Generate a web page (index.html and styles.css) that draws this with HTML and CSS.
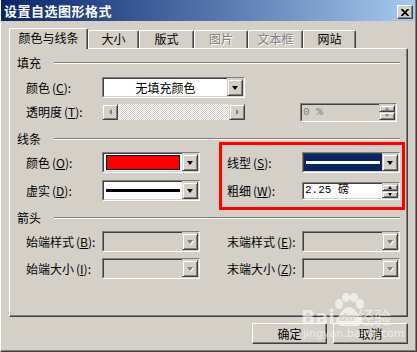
FILE: index.html
```html
<!DOCTYPE html>
<html>

<head>
  <meta charset="UTF-8">
  <meta name="viewport" content="width=device-width, initial-scale=1">
  <title>设置自选图形格式</title>

  <link rel="stylesheet" href="styles.css">
</head>

<body>

  <div class="window">
    <div class="titlebar">
      <span class="title">设置自选图形格式</span>
      <span class="close-btn">
        <svg width="8" height="7" viewBox="0 0 8 7"><path d="M0.5 0 L7.5 7 M7.5 0 L0.5 7" stroke="#000" stroke-width="1.8"/></svg>
      </span>
    </div>

    <div class="tabs">
      <span class="tab active" style="width:79px">颜色与线条</span>
      <span class="tab" style="width:51px">大小</span>
      <span class="tab" style="width:55px">版式</span>
      <span class="tab disabled" style="width:54px">图片</span>
      <span class="tab disabled" style="width:55px">文本框</span>
      <span class="tab" style="width:53px">网站</span>
    </div>

    <div class="panel">
      <div class="group-title"><span>填充</span></div>

      <div class="row first">
        <label>颜色<em>(<u>C</u>):</em></label>
        <div class="combo fill-combo">
          <div class="combo-field center">无填充颜色</div>
          <span class="combo-btn"><i class="tri"></i></span>
        </div>
      </div>

      <div class="row second">
        <label>透明度<em>(<u>T</u>):</em></label>
        <div class="slider">
          <span class="sbtn"><i class="tri-left"></i></span>
          <span class="track"></span>
          <span class="sbtn"><i class="tri-right"></i></span>
        </div>
        <div class="spin off pct">
          <div class="spin-field">0 %</div>
          <div class="spin-btns">
            <span><i class="tri-up"></i></span>
            <span><i class="tri-down"></i></span>
          </div>
        </div>
      </div>

      <div class="group-title line-title"><span>线条</span></div>

      <div class="grid line-grid">
        <label>颜色<em>(<u>O</u>):</em></label>
        <div class="combo">
          <div class="combo-field"><span class="swatch"></span></div>
          <span class="combo-btn"><i class="tri"></i></span>
        </div>
        <span></span>
        <label>线型<em>(<u>S</u>):</em></label>
        <div class="combo">
          <div class="combo-field selected"><span class="stroke thin"></span></div>
          <span class="combo-btn"><i class="tri"></i></span>
        </div>

        <label>虚实<em>(<u>D</u>):</em></label>
        <div class="combo">
          <div class="combo-field"><span class="stroke"></span></div>
          <span class="combo-btn"><i class="tri"></i></span>
        </div>
        <span></span>
        <label>粗细<em>(<u>W</u>):</em></label>
        <div class="spin">
          <div class="spin-field">2.25 磅</div>
          <div class="spin-btns">
            <span><i class="tri-up"></i></span>
            <span><i class="tri-down"></i></span>
          </div>
        </div>
      </div>

      <div class="group-title arrow-title"><span>箭头</span></div>

      <div class="grid arrow-grid">
        <label>始端样式<em>(<u>B</u>):</em></label>
        <div class="combo off">
          <div class="combo-field"></div>
          <span class="combo-btn"><i class="tri"></i></span>
        </div>
        <span></span>
        <label>末端样式<em>(<u>E</u>):</em></label>
        <div class="combo off">
          <div class="combo-field"></div>
          <span class="combo-btn"><i class="tri"></i></span>
        </div>

        <label>始端大小<em>(<u>I</u>):</em></label>
        <div class="combo off">
          <div class="combo-field"></div>
          <span class="combo-btn"><i class="tri"></i></span>
        </div>
        <span></span>
        <label>末端大小<em>(<u>Z</u>):</em></label>
        <div class="combo off">
          <div class="combo-field"></div>
          <span class="combo-btn"><i class="tri"></i></span>
        </div>
      </div>

      <div class="highlight"></div>
    </div>

    <div class="footer">
      <button class="btn">确定</button>
      <button class="btn">取消</button>
    </div>

    <!-- watermark over the buttons -->
    <div class="watermark">
      <span class="wm-bai">Bai</span>
      <svg class="wm-paw" width="34" height="34" viewBox="0 0 34 34">
        <ellipse cx="7" cy="11" rx="4" ry="5"/>
        <ellipse cx="14" cy="4.5" rx="4" ry="4.5"/>
        <ellipse cx="22" cy="4.5" rx="4" ry="4.5"/>
        <ellipse cx="28" cy="11" rx="4" ry="5"/>
        <path d="M17 14 C11 14 9 21 5 25 C2 29 5 33 10 33 L24 33 C29 33 32 29 29 25 C25 21 23 14 17 14 Z"/>
      </svg>
      <span class="wm-du">du</span>
      <span class="wm-jy">经验</span>
      <span class="wm-url">jingyan.baidu.com</span>
    </div>
  </div>

</body>

</html>
```

FILE: styles.css
```css
body {
  margin: 0;
  font-family: "Noto Sans CJK SC", "DejaVu Sans", sans-serif;
  font-size: 12px;
  color: #000;
}

.window {
  position: relative;
  width: 417px;
  height: 352px;
  box-sizing: border-box;
  background: #d4d0c8;
  border: 1px solid;
  border-color: #d4d0c8 #404040 #404040 #fff;
  border-top: 0;
  box-shadow: inset -1px -1px #808080;
  overflow: hidden;
}

.titlebar {
  display: flex;
  align-items: center;
  justify-content: space-between;
  height: 21px;
  margin-right: 1px;
  padding: 0 2px 0 3px;
  background: linear-gradient(to right, #0a246a, #5a7bb0 55%, #a6caf0);
}

.title {
  color: #fff;
  font-weight: bold;
  font-size: 13px;
  line-height: 14px;
  letter-spacing: 0.5px;
}

.close-btn {
  display: flex;
  align-items: center;
  justify-content: center;
  width: 16px;
  height: 14px;
  margin-top: 3px;
  box-sizing: border-box;
  background: #d4d0c8;
  border: 1px solid;
  border-color: #fff #404040 #404040 #fff;
  box-shadow: inset -1px -1px #808080;
}

.tabs {
  display: flex;
  align-items: flex-end;
  height: 20px;
  margin: 7px 0 0 8px;
}

.tab {
  box-sizing: border-box;
  height: 18px;
  line-height: 16px;
  text-align: center;
  border-top: 1px solid #fff;
  border-left: 1px solid #fff;
  border-right: 1px solid #404040;
  box-shadow: inset -1px 0 #808080;
  border-radius: 2px 2px 0 0;
}

.tab.active {
  position: relative;
  z-index: 1;
  height: 21px;
  margin-bottom: -1px;
  line-height: 18px;
  background: #d4d0c8;
}

.tab.disabled {
  color: #808080;
  text-shadow: 1px 1px #fff;
}

.panel {
  position: relative;
  width: 399px;
  height: 269px;
  box-sizing: border-box;
  margin-left: 8px;
  padding: 7px 7px 0 7px;
  border: 1px solid;
  border-color: #fff #404040 #404040 #fff;
  box-shadow: inset -1px -1px #808080;
}

.group-title {
  display: flex;
  align-items: center;
  gap: 13px;
  height: 14px;
  line-height: 14px;
}

.group-title::after {
  content: "";
  flex: 1;
  border-top: 1px solid #808080;
  border-bottom: 1px solid #fff;
}

.line-title {
  margin-top: 11px;
}

.arrow-title {
  margin-top: 10px;
}

label {
  white-space: nowrap;
  line-height: 14px;
}

label em {
  font-style: normal;
  margin-left: 2px;
}

.row {
  display: flex;
  align-items: center;
  height: 21px;
  padding-left: 9px;
}

.row label {
  width: 76px;
  flex: none;
}

.row.first {
  margin-top: 7px;
}

.row.second {
  margin-top: 5px;
  height: 18px;
}

.grid {
  display: grid;
  grid-template-columns: 76px 98px 27px 75px 98px;
  grid-auto-rows: 21px;
  align-items: center;
  padding-left: 9px;
}

.line-grid {
  margin-top: 6px;
  row-gap: 7px;
}

.arrow-grid {
  margin-top: 6px;
  row-gap: 6px;
}

/* combo box */
.combo {
  display: flex;
  height: 21px;
  box-sizing: border-box;
  border: 1px solid;
  border-color: #808080 #fff #fff #808080;
}

.fill-combo {
  width: 143px;
}

.combo-field {
  flex: 1;
  display: flex;
  align-items: center;
  padding: 0 2px;
  background: #fff;
  border: 1px solid;
  border-color: #404040 #d4d0c8 #d4d0c8 #404040;
  border-right: 0;
  line-height: 14px;
}

.combo-field.center {
  justify-content: center;
}

.combo-field.selected {
  background: #0a246a;
}

.combo-btn {
  display: flex;
  align-items: center;
  justify-content: center;
  width: 16px;
  box-sizing: border-box;
  margin: 1px 1px 1px 0;
  background: #d4d0c8;
  border: 1px solid;
  border-color: #d4d0c8 #404040 #404040 #d4d0c8;
  box-shadow: inset 1px 1px #fff, inset -1px -1px #808080;
}

.tri {
  width: 0;
  height: 0;
  border-left: 3.5px solid transparent;
  border-right: 3.5px solid transparent;
  border-top: 4px solid #000;
}

.combo.off .combo-field {
  background: #d4d0c8;
}

.combo.off .tri {
  border-top-color: #808080;
  filter: drop-shadow(1px 1px 0 #fff);
}

.swatch {
  flex: 1;
  height: 13px;
  background: #ff0000;
  border: 1px solid #000;
}

.stroke {
  flex: 1;
  height: 3px;
  background: #000;
}

.stroke.thin {
  background: #fff;
}

/* slider */
.slider {
  display: flex;
  width: 143px;
  height: 16px;
}

.sbtn {
  display: flex;
  align-items: center;
  justify-content: center;
  width: 16px;
  box-sizing: border-box;
  background: #d4d0c8;
  border: 1px solid;
  border-color: #d4d0c8 #404040 #404040 #d4d0c8;
  box-shadow: inset 1px 1px #fff, inset -1px -1px #808080;
}

.track {
  flex: 1;
  background-image: repeating-conic-gradient(#fff 0% 25%, #d4d0c8 0% 50%);
  background-size: 2px 2px;
}

.tri-left,
.tri-right {
  width: 0;
  height: 0;
  border-top: 3px solid transparent;
  border-bottom: 3px solid transparent;
}

.tri-left {
  border-right: 3px solid #808080;
}

.tri-right {
  border-left: 3px solid #808080;
}

/* spin box */
.spin {
  display: flex;
  height: 18px;
  box-sizing: border-box;
  border: 1px solid;
  border-color: #808080 #fff #fff #808080;
}

.spin.pct {
  width: 97px;
  margin-left: 55px;
  height: 19px;
}

.spin-field {
  flex: 1;
  display: flex;
  align-items: center;
  padding-left: 1px;
  background: #fff;
  border: 1px solid;
  border-color: #404040 #d4d0c8 #d4d0c8 #404040;
  border-right: 0;
  font-family: "Liberation Mono", "Noto Sans CJK SC", monospace;
  font-size: 11px;
  line-height: 13px;
}

.spin.off .spin-field {
  background: #d4d0c8;
  color: #808080;
}

.spin-btns {
  display: flex;
  flex-direction: column;
  width: 16px;
  margin: 1px 1px 1px 0;
}

.spin-btns span {
  flex: 1;
  display: flex;
  align-items: center;
  justify-content: center;
  box-sizing: border-box;
  background: #d4d0c8;
  border: 1px solid;
  border-color: #d4d0c8 #404040 #404040 #d4d0c8;
  box-shadow: inset 1px 1px #fff, inset -1px -1px #808080;
}

.tri-up,
.tri-down {
  width: 0;
  height: 0;
  border-left: 2.5px solid transparent;
  border-right: 2.5px solid transparent;
}

.tri-up {
  border-bottom: 3px solid #000;
}

.tri-down {
  border-top: 3px solid #000;
}

.spin.off .tri-up {
  border-bottom-color: #808080;
}

.spin.off .tri-down {
  border-top-color: #808080;
}

.highlight {
  position: absolute;
  left: 209px;
  top: 93px;
  width: 186px;
  height: 68px;
  box-sizing: border-box;
  border: 3px solid #ff0000;
}

/* buttons */
.footer {
  display: flex;
  justify-content: flex-end;
  gap: 6px;
  margin: 6px 8px 0 0;
}

.btn {
  width: 75px;
  height: 21px;
  padding: 0;
  font-family: inherit;
  font-size: 12px;
  color: #000;
  background: #d4d0c8;
  border: 1px solid;
  border-color: #fff #404040 #404040 #fff;
  box-shadow: inset -1px -1px #808080;
}

.watermark {
  position: absolute;
  left: 298px;
  top: 292px;
  width: 110px;
  height: 52px;
  color: rgba(255, 255, 255, 0.6);
  font-family: "DejaVu Sans", sans-serif;
}

.wm-bai {
  position: absolute;
  left: 2px;
  top: 15px;
  font-size: 19px;
  font-weight: bold;
  line-height: 20px;
}

.wm-paw {
  position: absolute;
  left: 33px;
  top: 1px;
  fill: rgba(255, 255, 255, 0.6);
}

.wm-du {
  position: absolute;
  left: 40px;
  top: 20px;
  font-size: 11px;
  font-weight: bold;
  line-height: 12px;
  color: rgba(212, 208, 200, 0.8);
}

.wm-jy {
  position: absolute;
  left: 58px;
  top: 15px;
  font-family: "Noto Sans CJK SC", sans-serif;
  font-size: 17px;
  line-height: 20px;
}

.wm-url {
  position: absolute;
  left: 4px;
  top: 36px;
  font-size: 11px;
  line-height: 12px;
}
```
